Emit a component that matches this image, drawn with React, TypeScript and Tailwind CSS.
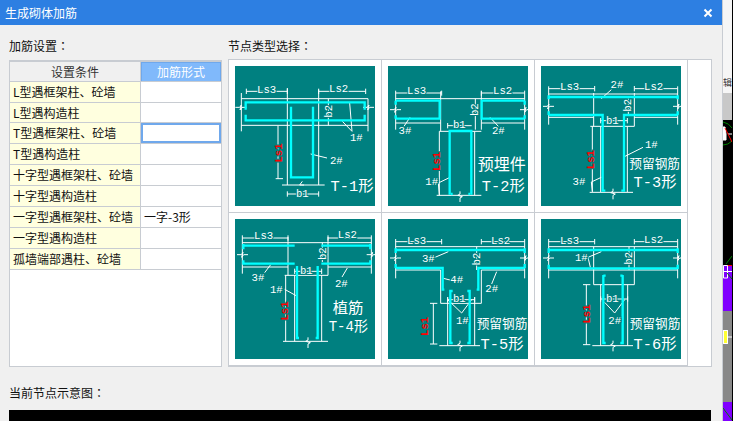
const rows = [
  { name: "L型遇框架柱、砼墙", form: "" },
  { name: "L型遇构造柱", form: "" },
  { name: "T型遇框架柱、砼墙", form: "" },
  { name: "T型遇构造柱", form: "" },
  { name: "十字型遇框架柱、砼墙", form: "" },
  { name: "十字型遇构造柱", form: "" },
  { name: "一字型遇框架柱、砼墙", form: "一字-3形" },
  { name: "一字型遇构造柱", form: "" },
  { name: "孤墙端部遇柱、砼墙", form: "" },
];

// wall / column break marks, in the same 3x units as the drawings
const breakH = (x: number, y: number) =>
  `M${x} ${y}H${x + 13}L${x + 18} ${y - 7}L${x + 14} ${y + 8}L${x + 20} ${y}H${x + 33}`;
const breakV = (x: number, y: number) =>
  `M${x} ${y}V${y + 8}L${x - 7} ${y + 12}L${x + 7} ${y + 16}L${x} ${y + 20}V${y + 32}`;

interface ILabel {
  text: string;
  x: number;
  y: number;
  rotate?: boolean;
  red?: boolean;
  size?: number;
}

interface IDiagramProps {
  originX: number;
  originY: number;
  white: string;
  cyan: string;
  labels: ILabel[];
}

const Diagram: React.FC<IDiagramProps> = ({ originX, originY, white, cyan, labels }) => {
  return (
    <svg
      viewBox={`${originX} ${originY} 420 420`}
      width={140}
      height={140}
      className="block bg-[#008080]"
    >
      <path d={white} fill="none" stroke="#ffffff" strokeWidth={3} />
      <path d={cyan} fill="none" stroke="#00ffff" strokeWidth={7} />
      {labels.map((l) => (
        <text
          key={l.text + l.x}
          x={l.x}
          y={l.y}
          textAnchor="middle"
          dominantBaseline="central"
          fontSize={l.size ?? 32}
          fill={l.red ? "#ff0000" : "#ffffff"}
          stroke="#008080"
          strokeWidth={l.size ? 0 : 6}
          transform={l.rotate ? `rotate(-90 ${l.x} ${l.y})` : undefined}
          className={`font-['Liberation_Mono','Noto_Sans_CJK_SC',monospace] [paint-order:stroke] ${l.red ? "font-bold" : ""}`}
        >
          {l.text}
        </text>
      ))}
    </svg>
  );
};

const diagrams: IDiagramProps[] = [
  {
    originX: 21,
    originY: 24,
    white: `M40 122H420M40 202H420M40 105V220M420 122V220M178 90V381M272 95V381M162 381H290
      M55 100H178M55 92V108M178 92V108M272 100H413M413 92V108M272 92V108
      M301 122V202M150 203V362M143 362H165M178 408H272M178 400V416M272 400V416
      M343 190L372 220L365 135M248 288L297 300M223 370L215 381H228
      ${breakH(22, 148)}${breakH(405, 148)}`,
    cyan: "M53 155V133H410V155M53 170V187H410V170M189 146V358H255V146",
    labels: [
      { text: "Ls3", x: 116, y: 96 },
      { text: "Ls2", x: 332, y: 94 },
      { text: "b2", x: 303, y: 160, rotate: true },
      { text: "Ls1", x: 152, y: 285, rotate: true, red: true },
      { text: "b1", x: 223, y: 408 },
      { text: "1#", x: 385, y: 240 },
      { text: "2#", x: 325, y: 310 },
      { text: "T-1形", x: 372, y: 388, size: 46 },
    ],
  },
  {
    originX: 24,
    originY: 24,
    white: `M47 122H434M47 195H182M304 195H434M47 98V215M434 98V215M182 100V220M304 100V215
      M178 220H304M178 220V412M284 220V412M170 412H304
      M47 105H185M185 98V113M304 105H434M304 98V113M203 203H275M203 195V211M286 122V215
      M90 178L72 205M330 178L355 205M210 358L175 375L178 412
      ${breakH(30, 155)}${breakH(420, 155)}${breakV(240, 400)}`,
    cyan: `M47 128H179V182H47M47 128V140M47 172V182M434 128H305V182H434M434 128V140M434 172V182
      M209 410V219H274V410M213 408H218M265 408H270`,
    labels: [
      { text: "Ls3", x: 110, y: 100 },
      { text: "Ls2", x: 368, y: 100 },
      { text: "b2", x: 285, y: 155, rotate: true },
      { text: "b1", x: 238, y: 200 },
      { text: "Ls1", x: 172, y: 310, rotate: true, red: true },
      { text: "3#", x: 75, y: 218 },
      { text: "2#", x: 355, y: 218 },
      { text: "1#", x: 155, y: 373 },
      { text: "预埋件", x: 365, y: 325, size: 48 },
      { text: "T-2形", x: 370, y: 388, size: 46 },
    ],
  },
  {
    originX: 24,
    originY: 24,
    white: `M47 108H434M47 178H182M304 178H434M47 85V200M434 85V200M182 105V205M304 105V205
      M172 205H304M178 205V402M203 205V402M283 205V402M170 403H300
      M47 92H185M185 84V100M304 92H434M304 84V100M203 188H283M203 180V196M283 180V196
      M286 122V170M205 122L235 95M270 298L330 268M205 358L175 372L178 400
      ${breakH(30, 145)}${breakH(420, 145)}${breakV(240, 392)}`,
    cyan: `M47 117H434M47 112V124M434 112V124M47 171H209V398H217M434 171H273V398H265
      M47 160V171M434 160V171`,
    labels: [
      { text: "Ls3", x: 110, y: 88 },
      { text: "Ls2", x: 362, y: 86 },
      { text: "2#", x: 252, y: 82 },
      { text: "b2", x: 285, y: 142, rotate: true },
      { text: "b1", x: 238, y: 188 },
      { text: "1#", x: 355, y: 262 },
      { text: "Ls1", x: 175, y: 305, rotate: true, red: true },
      { text: "3#", x: 138, y: 373 },
      { text: "预留钢筋", x: 365, y: 320, size: 38 },
      { text: "T-3形", x: 366, y: 375, size: 46 },
    ],
  },
  {
    originX: 21,
    originY: 21,
    white: `M43 92H430M43 165H180M300 165H430M43 70V185M430 70V185M180 75V190M300 75V190
      M170 190H300M173 190V388M200 190V388M281 190V388M165 388H300
      M43 78H180M180 70V86M300 78H430M300 70V86M200 178H281M200 170V186M281 170V186
      M283 92V150M128 158L110 182M358 168L342 195M208 253L170 232
      ${breakH(27, 128)}${breakH(416, 128)}${breakV(240, 376)}`,
    cyan: `M43 101H200M280 101H430M43 155H200M280 155H430M46 96V112M427 96V112M46 145V158M427 145V158
      M207 162V382M269 162V382M207 378H213M269 378H263`,
    labels: [
      { text: "Ls3", x: 107, y: 73 },
      { text: "Ls2", x: 358, y: 70 },
      { text: "b2", x: 285, y: 125, rotate: true },
      { text: "b1", x: 235, y: 176 },
      { text: "3#", x: 90, y: 197 },
      { text: "2#", x: 340, y: 217 },
      { text: "1#", x: 145, y: 235 },
      { text: "Ls1", x: 172, y: 297, rotate: true, red: true },
      { text: "植筋", x: 360, y: 290, size: 46 },
      { text: "T-4形", x: 361, y: 346, size: 42 },
    ],
  },
  {
    originX: 24,
    originY: 20,
    white: `M47 103H434M47 173H182M304 173H434M47 80V198M434 80V198M182 173V273M304 173V273
      M182 273H304M203 255V400M284 255V400M178 400H300M290 103V173
      M47 88H185M185 80V96M304 88H434M304 80V96M203 262H284M203 254V270M284 254V270
      M160 273V395M150 273H172M150 395H172M205 118L165 135M190 198L210 203M350 178L335 215
      M203 262L245 302L275 262
      ${breakH(30, 137)}${breakH(420, 137)}${breakV(240, 385)}`,
    cyan: `M47 113H434M47 108V122M434 108V122M47 167H188V232H193M434 167H295V232H290
      M47 155V167M434 155V167M211 232V392H218M269 232V392H262M211 236H218M269 236H262`,
    labels: [
      { text: "Ls3", x: 110, y: 86 },
      { text: "Ls2", x: 362, y: 86 },
      { text: "3#", x: 145, y: 140 },
      { text: "b2", x: 290, y: 140, rotate: true },
      { text: "4#", x: 230, y: 203 },
      { text: "2#", x: 335, y: 230 },
      { text: "b1", x: 238, y: 260 },
      { text: "1#", x: 247, y: 326 },
      { text: "Ls1", x: 135, y: 342, rotate: true, red: true },
      { text: "预留钢筋", x: 366, y: 337, size: 38 },
      { text: "T-5形", x: 366, y: 398, size: 46 },
    ],
  },
  {
    originX: 24,
    originY: 20,
    white: `M47 103H434M47 173H434M47 80V198M434 80V198M182 103V217M304 103V217
      M182 217H304M203 217V400M284 217V400M178 400H300
      M47 88H185M185 80V96M304 88H434M304 80V96M203 260H284M203 252V268M284 252V268
      M160 217V397M150 217H172M150 397H172M205 118L165 135L172 165M288 103V173
      M215 270L245 302L275 262
      ${breakH(30, 137)}${breakH(420, 137)}${breakV(240, 385)}`,
    cyan: `M47 113H434M47 168H434M47 108V122M434 108V122M47 157V170M434 157V170
      M211 188V392H218M269 188V392H262M211 190H218M269 190H262`,
    labels: [
      { text: "Ls3", x: 110, y: 86 },
      { text: "Ls2", x: 362, y: 82 },
      { text: "1#", x: 145, y: 138 },
      { text: "b2", x: 288, y: 138, rotate: true },
      { text: "b1", x: 238, y: 260 },
      { text: "2#", x: 245, y: 326 },
      { text: "Ls1", x: 163, y: 305, rotate: true, red: true },
      { text: "预留钢筋", x: 366, y: 337, size: 38 },
      { text: "T-6形", x: 366, y: 398, size: 46 },
    ],
  },
];

export default function App() {
  return (
    <div className="flex w-[733px] h-[421px] overflow-hidden bg-white font-['Noto_Sans_CJK_SC','Liberation_Sans',sans-serif] text-[12px] text-[#111111]">
      <div className="flex flex-col w-[723px] h-full bg-[#f0f0f0] border-r border-[#c8ccd2]">
        <div className="flex items-center justify-between h-[25px] shrink-0 bg-[#2d7fe2] pl-[5px] pr-[9px] text-white">
          <span className="leading-none">生成砌体加筋</span>
          <svg width="10" height="10" viewBox="0 0 10 10">
            <path d="M1.5 1.5L8.5 8.5M8.5 1.5L1.5 8.5" stroke="#ffffff" strokeWidth="2" />
          </svg>
        </div>

        <div className="flex gap-[6px] pl-[9px] h-[342px] shrink-0">
          <div className="flex flex-col w-[213px] pt-[11px]">
            <div className="h-[20px] mb-[4px] leading-[20px] font-['Noto_Sans_CJK_TC',sans-serif]">加筋设置：</div>
            <div className="flex flex-col h-[307px] bg-white border border-[#c8ccd2] border-t-2">
              <div className="flex h-[20px] shrink-0 border-b border-[#c8ccd2]">
                <div className="flex items-center justify-center w-[131px] bg-[#f0f0f0] border-r border-[#c8ccd2] text-[#333333]">
                  设置条件
                </div>
                <div className="flex flex-1 items-center justify-center bg-[#80b9fb] border border-b-0 border-[#6fa8ec] text-white">
                  加筋形式
                </div>
              </div>
              {rows.map((row, i) => (
                <div
                  key={row.name}
                  className={`flex shrink-0 border-b border-[#c8ccd2] ${i === 1 ? "h-[20px]" : "h-[21px]"}`}
                >
                  <div className="flex items-center w-[131px] pl-[3px] bg-[#ffffdf] border-r border-[#c8ccd2] whitespace-nowrap">
                    {row.name}
                  </div>
                  <div
                    className={`flex flex-1 items-center pl-[3px] whitespace-nowrap ${i === 2 ? "border-2 border-[#6fa8ec]" : ""}`}
                  >
                    {row.form}
                  </div>
                </div>
              ))}
            </div>
          </div>

          <div className="flex flex-col w-[484px] pt-[11px]">
            <div className="h-[20px] mb-[3px] leading-[20px] font-['Noto_Sans_CJK_TC',sans-serif]">节点类型选择：</div>
            <div className="h-[308px] bg-white border border-[#c8ccd2]">
              <div className="grid grid-cols-[153px_153px_153px] w-[459px]">
                {diagrams.map((d) => (
                  <div key={d.white} className="p-[6px] border-r border-b border-[#c8ccd2]">
                    <Diagram {...d} />
                  </div>
                ))}
              </div>
            </div>
          </div>
        </div>

        <div className="h-[28px] pl-[9px] pt-[18px] leading-[16px] shrink-0 whitespace-nowrap font-['Noto_Sans_CJK_TC',sans-serif]">当前节点示意图：</div>
        <div className="flex-1 mt-[15px] ml-[9px] mr-[11px] bg-black" />
      </div>

      <div className="flex flex-col flex-1 min-w-0 overflow-hidden border-r border-black">
        <div className="flex h-[93px] shrink-0 items-end pb-[6px] bg-[#f6f6f6] text-[9px] leading-none text-[#333333]">
          <span>辑</span>
        </div>
        <div className="h-[27px] shrink-0 bg-[#c8c8c8]" />
        <div className="h-[145px] shrink-0 bg-black">
          <svg width="9" height="145" viewBox="0 0 9 145" className="block">
            <path d="M0 2Q6 3 9 8M0 25Q5 25 9 21" fill="none" stroke="#008000" />
            <path d="M0 7H2L3 14V20H0ZM5 14H9" fill="#ffffff" stroke="#ffffff" />
            <path d="M2 8L9 22" stroke="#ff0000" />
            <path d="M3 144L9 136" stroke="#008000" />
          </svg>
        </div>
        <div className="h-[46px] shrink-0 bg-[#8000ff]">
          <svg width="9" height="46" viewBox="0 0 9 46" className="block">
            <path d="M4 0H9" stroke="#ff0000" strokeWidth="2" />
            <path d="M0.5 0.5H4.5V13H0.5ZM0 6.5H9" fill="none" stroke="#ffffff" />
            <path d="M4 8L9 14" stroke="#008000" />
          </svg>
        </div>
        <div className="flex-1 bg-[#888888] pt-[19px]">
          <svg width="9" height="14" viewBox="0 0 9 14" className="block">
            <rect x="0.5" y="0.5" width="4" height="13" fill="#ffff33" stroke="#ffffff" />
            <path d="M4 7H9" stroke="#ffffff" />
          </svg>
        </div>
        <div className="h-[19px] shrink-0 bg-[#8000ff]">
          <svg width="9" height="19" viewBox="0 0 9 19" className="block">
            <path d="M0 6L9 18" stroke="#008000" />
          </svg>
        </div>
      </div>
    </div>
  );
}
